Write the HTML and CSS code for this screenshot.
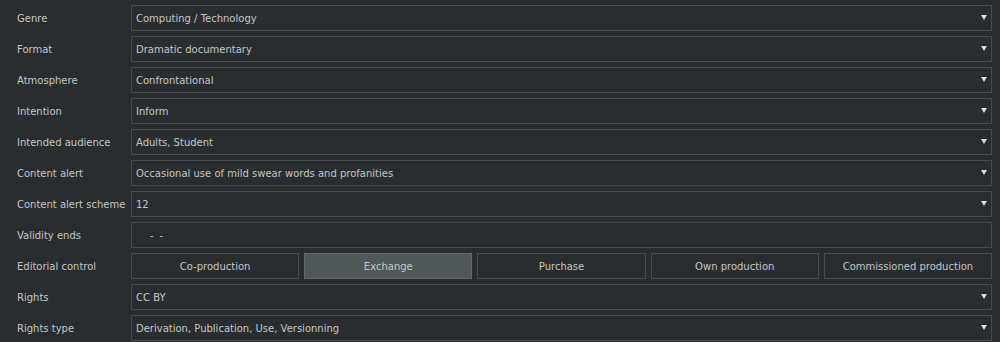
FILE: index.html
```html
<!DOCTYPE html>
<html lang="en">
<head>
    <meta charset="UTF-8">
    <title>Metadata</title>
    <link rel="stylesheet" href="styles.css">
</head>
<body>
    <div class="form">
        <div class="row">
            <label>Genre</label>
            <div class="select">Computing / Technology</div>
        </div>
        <div class="row">
            <label>Format</label>
            <div class="select">Dramatic documentary</div>
        </div>
        <div class="row">
            <label>Atmosphere</label>
            <div class="select">Confrontational</div>
        </div>
        <div class="row">
            <label>Intention</label>
            <div class="select">Inform</div>
        </div>
        <div class="row">
            <label>Intended audience</label>
            <div class="select">Adults, Student</div>
        </div>
        <div class="row">
            <label>Content alert</label>
            <div class="select">Occasional use of mild swear words and profanities</div>
        </div>
        <div class="row">
            <label>Content alert scheme</label>
            <div class="select">12</div>
        </div>
        <div class="row">
            <label>Validity ends</label>
            <div class="field date"><span>-</span><span>-</span></div>
        </div>
        <div class="row">
            <label>Editorial control</label>
            <div class="buttons">
                <button>Co-production</button>
                <button class="checked">Exchange</button>
                <button>Purchase</button>
                <button>Own production</button>
                <button>Commissioned production</button>
            </div>
        </div>
        <div class="row">
            <label>Rights</label>
            <div class="select">CC BY</div>
        </div>
        <div class="row">
            <label>Rights type</label>
            <div class="select">Derivation, Publication, Use, Versionning</div>
        </div>
    </div>
</body>
</html>
```

FILE: styles.css
```css
:root {
    --bg: #2a2d30;
    --border: #474b4f;
    --text: #c4c5c6;
    --checked: #50585a;
    --checked-border: #60686a;
}

* {
    margin: 0;
    padding: 0;
    box-sizing: border-box;
}

body {
    background: var(--bg);
    color: var(--text);
    font-family: 'DejaVu Sans', sans-serif;
    font-size: 10px;
}

.form {
    padding: 5px 8px 0 17px;
    display: flex;
    flex-direction: column;
    gap: 5px;
}

.row {
    display: flex;
    align-items: center;
    height: 26px;
}

label {
    width: 114px;
    flex-shrink: 0;
    white-space: nowrap;
}

.select,
.field {
    flex: 1;
    height: 26px;
    border: 1px solid var(--border);
    padding: 0 4px;
    display: flex;
    align-items: center;
}

.select {
    position: relative;
}

.select::after {
    content: '';
    position: absolute;
    right: 4px;
    top: 9px;
    border-left: 3.5px solid transparent;
    border-right: 3.5px solid transparent;
    border-top: 5px solid #dcdcdc;
}

.date {
    padding-left: 18px;
    gap: 6px;
}

.buttons {
    flex: 1;
    display: flex;
    gap: 5px;
}

button {
    flex: 1;
    height: 26px;
    background: var(--bg);
    border: 1px solid var(--border);
    color: var(--text);
    font-family: inherit;
    font-size: 10px;
}

button.checked {
    background: var(--checked);
    border-color: var(--checked-border);
}
```
